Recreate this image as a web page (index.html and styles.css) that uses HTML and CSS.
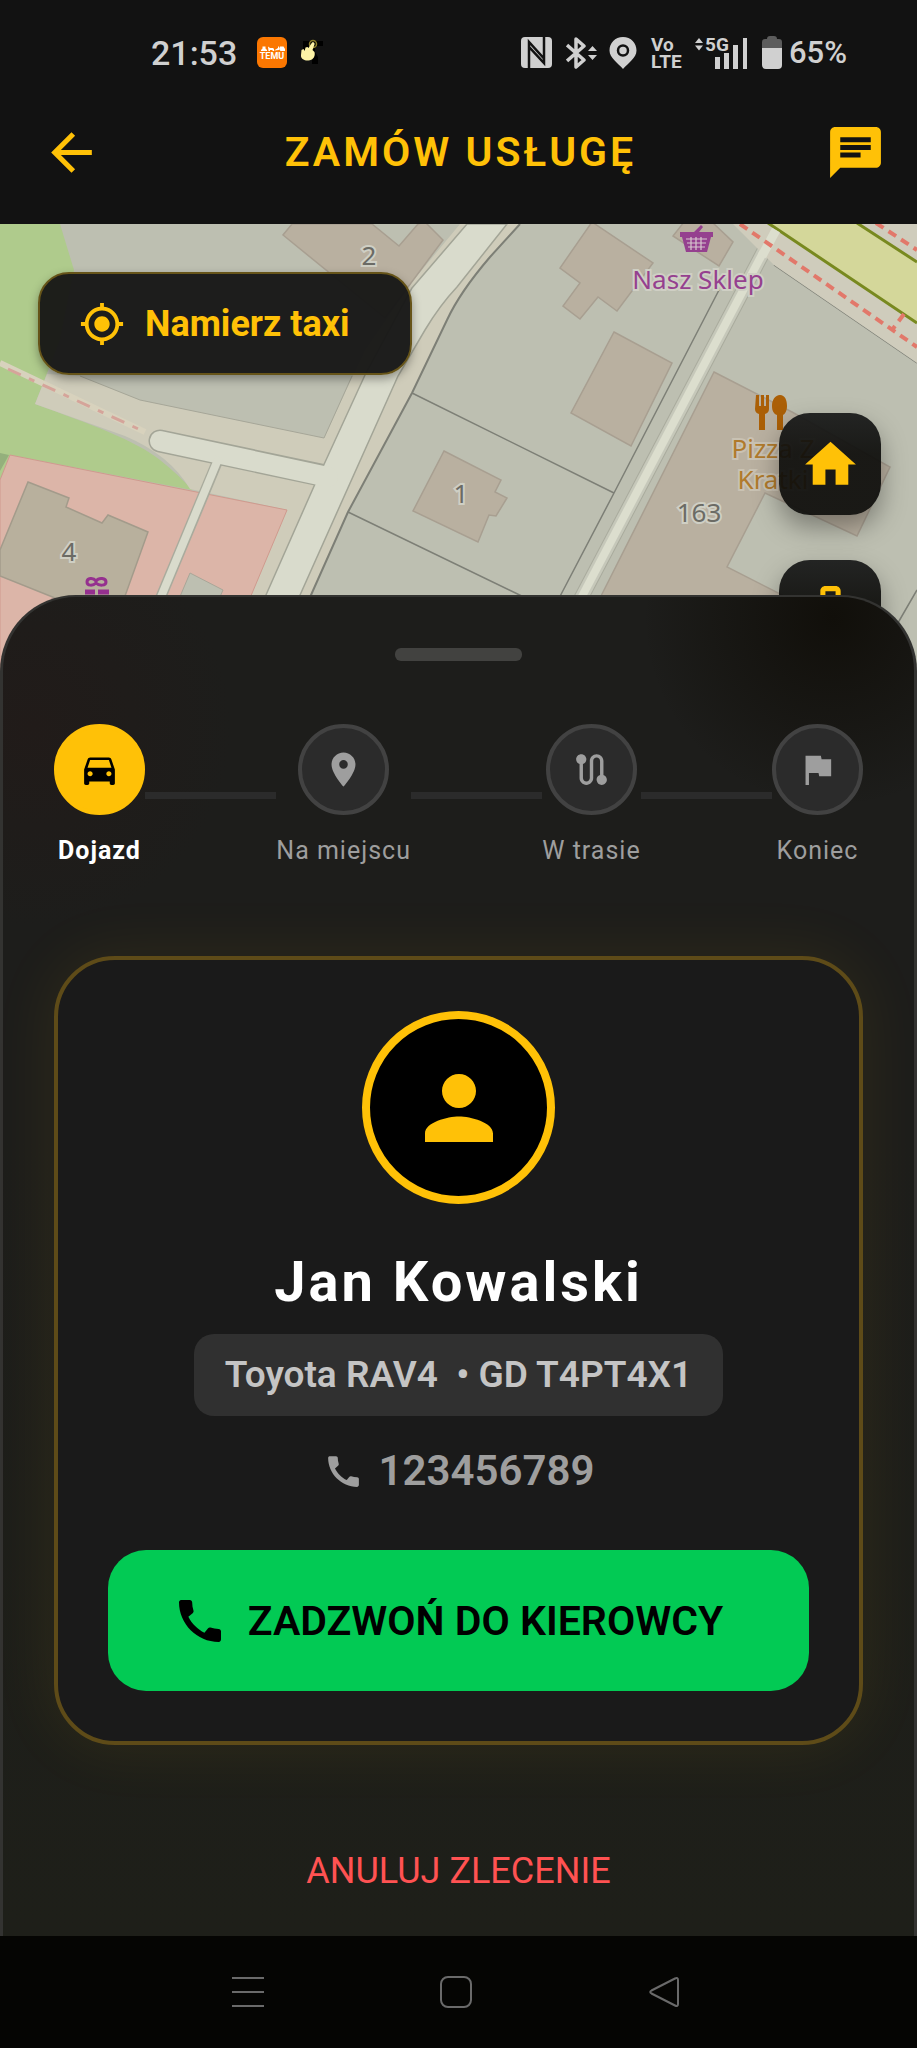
FILE: index.html
```html
<!DOCTYPE html>
<html lang="pl">
<head>
<meta charset="utf-8">
<meta name="viewport" content="width=device-width, initial-scale=1">
<title>Zamów usługę</title>
<link rel="stylesheet" href="styles.css">
</head>
<body>
<header class="top">
  <div class="status">
    <div class="status-group">
      <time class="clock">21:53</time>
      <svg class="ic-temu" viewBox="0 0 30 31" width="30" height="31" aria-hidden="true">
        <rect width="30" height="31" rx="6" fill="#fb7701"/>
        <path d="M4 14v-1l1.500-1.500V9.500h3v2L10 13v1zM11 9.500l2 1.500h3l1 1v2h-1.500v-1h-2.500v1h-1.500zM17 13.500l4-2.500v-1.500h1V13zM23 9.500h3.500L28 12v2h-4.500l-1.500-2z" fill="#fff"/>
        <text x="15" y="22" class="temu-text">TEMU</text>
      </svg>
      <svg class="ic-hand" viewBox="0 0 24 28" width="24" height="28" aria-hidden="true">
        <path d="M2 2h20v5h-8v6l3 5v7h-6v-6H2z" fill="#000"/>
        <circle cx="12" cy="5" r="3.500" fill="none" stroke="#8c7e2a" stroke-width="1.500"/>
        <path d="M11 3.500c1.500-.6 3 .4 2.500 2L11.500 11l2 2c1 4-1 8-6 8.500C3 22-.5 19.500 0 16l.5-5 2-1 1.200 2 .8-3.500 2-.5 1 1z" fill="#fdf3a6"/>
      </svg>
    </div>
    <div class="status-group status-right">
      <svg viewBox="0 0 31 31" width="31" height="31" aria-hidden="true">
        <rect width="31" height="31" rx="4" fill="#d0d0d0"/>
        <path d="M8 31V5l15 16.500V9M23 0v26L8 10v12" fill="none" stroke="#121212" stroke-width="2.500" />
      </svg>
      <svg class="ic-bt" viewBox="0 0 31 32" width="31" height="32" aria-hidden="true">
        <path d="M1 8l17 15-8 7V2l8 7L1 24" fill="none" stroke="#d0d0d0" stroke-width="3.500" stroke-linejoin="round"/>
        <path d="M22 14l4.500-5 4.500 5zM22 18l4.500 5 4.500-5z" fill="#d0d0d0"/>
      </svg>
      <svg class="ic-loc" viewBox="0 0 28 32" width="28" height="32" aria-hidden="true">
        <path d="M14 0C6 0 .5 6 .5 13.500.5 21 9 26 14 32c5-6 13.500-11 13.500-18.500C27.500 6 22 0 14 0z" fill="#d0d0d0"/>
        <circle cx="14" cy="13.500" r="5" fill="none" stroke="#121212" stroke-width="2.500"/>
      </svg>
      <svg class="ic-volte" viewBox="0 0 28 32" width="28" height="32" role="img" aria-label="VoLTE">
        <text x="0" y="14" class="net-text">Vo</text>
        <text x="0" y="31" class="net-text">LTE</text>
      </svg>
      <svg class="ic-signal" viewBox="0 0 53 32" width="53" height="32" role="img" aria-label="5G">
        <path d="M0 6l4-5 4 5zM0 8.500l4 5 4-5z" fill="#d0d0d0"/>
        <text x="10" y="14" class="net-text">5G</text>
        <path d="M20 20h5v12h-5zM29 16h5v16h-5zM38 8h5v24h-5zM48 1h4v31h-4z" fill="#d0d0d0"/>
      </svg>
      <svg class="ic-batt" viewBox="0 0 20 33" width="20" height="33" aria-hidden="true">
        <path d="M0 12V6q0-3 3-3h2q0-3 3-3h4q3 0 3 3h2q3 0 3 3v6z" fill="#5c5c5c"/>
        <path d="M0 12h20v17q0 4-4 4H4q-4 0-4-4z" fill="#d0d0d0"/>
      </svg>
      <span class="percent">65%</span>
    </div>
  </div>
  <div class="appbar">
    <button class="icon-btn" aria-label="Wstecz"><svg class="icon-lg" viewBox="0 0 24 24"><path d="M20 11H7.830l5.590-5.590L12 4l-8 8 8 8 1.410-1.410L7.830 13H20v-2z"/></svg></button>
    <h1 class="title">ZAMÓW USŁUGĘ</h1>
    <button class="icon-btn" aria-label="Czat"><svg class="icon-lg" viewBox="0 0 24 24"><path d="M20 2H4c-1.100 0-1.990.9-1.990 2L2 22l4-4h14c1.100 0 2-.9 2-2V4c0-1.100-.9-2-2-2zM6 9h12v2H6V9zm8 5H6v-2h8v2zm4-6H6V6h12v2z"/></svg></button>
  </div>
</header>

<main class="main">
  <section class="map" aria-label="Mapa">
    <svg class="map-art" viewBox="0 224 917 491" preserveAspectRatio="xMidYMin slice">
      <rect y="224" width="917" height="491" fill="#bdbfb1"/>
      <!-- green area -->
      <path d="M0 224H60L74 270L60 340L35 404C90 424 135 440 160 460Q180 476 192 490L10 455L0 480Z" fill="#afcb8c"/>
      <path d="M0 453L9 455L0 471Z" fill="#94b07c"/>
      <!-- verges -->
      <path d="M47 374L80 376L140 400L324 438L365 350L412 282L460 224H520L490 257Q462 290 447 320L412 393L348 512L305 610H240L287 510L190 489Q170 455 125 436L35 404Z" fill="#cfccba"/>
      <path d="M80 376L140 400L324 438L352 376" fill="none" stroke="#a6a698" stroke-width="1"/>
      <path d="M0 363L145 432" stroke="#d8d2bd" stroke-width="6"/>
      <path d="M8 369L145 432" stroke="#d5a49a" stroke-width="3" stroke-dasharray="14 9 6 9"/>
      <!-- pink block -->
      <path d="M10 455L287 510L245 610L0 715V480Z" fill="#dcb5a8" stroke="#cf9a8e"/>
      <path d="M28 482L69 498L66 507L102 523L108 515L148 532L120 610L55 598L0 576V550Z" fill="#b8b09d" stroke="#a39b8b" stroke-width="1.500"/>
      <path d="M190 573L223 590L216 606H176Z" fill="#bdbfb1" stroke="#a9a698"/>
      <!-- roads -->
      <path d="M218 460L158 604" stroke="#a9ab9d" stroke-width="11"/>
      <path d="M160 441L330 477" stroke="#a3a597" stroke-width="23" stroke-linecap="round"/>
      <path d="M262 604L315 484L365 375L412 288L467 224H507L457 287Q440 305 425 330L398 376L296 604Z" fill="#d9dbcc" stroke="#a3a597" stroke-width="1.500"/>
      <path d="M160 441L328 477" stroke="#d9dbcc" stroke-width="20" stroke-linecap="round"/>
      <path d="M219 457L158 604" stroke="#d9dbcc" stroke-width="8"/>
      <!-- parcel lines -->
      <g fill="none" stroke="#7d7f76" stroke-width="1.500">
        <path d="M307 604L348 512L412 393L447 320Q460 292 490 257L520 224" stroke-width="2"/>
        <path d="M412 393L614 493M348 512L530 600M719 290L614 493L556 604M774 265L917 363M917 590L895 628"/>
      </g>
      <!-- narrow road -->
      <path d="M776 228L578 604" stroke="#a9ab9d" stroke-width="15"/>
      <path d="M776 228L578 604" stroke="#c6c8ba" stroke-width="13"/>
      <path d="M776 228L578 604" stroke="#dcdece" stroke-width="8"/>
      <!-- main street -->
      <path d="M733 224H917V363L774 265Z" fill="#cfccbc"/>
      <path d="M770 224H859L917 262V323Z" fill="#d4d79a"/>
      <path d="M768 223L917 323M857 223L917 262" stroke="#78891f" stroke-width="3"/>
      <path d="M776 230L762 256" stroke="#dcdece" stroke-width="9"/>
      <path d="M740 224L917 347M876 223L917 250M904 314L892 330" stroke="#e2786a" stroke-width="4" stroke-dasharray="9 6"/>
      <!-- buildings -->
      <g fill="#b9b0a0" stroke="#a89f91" stroke-width="1.500">
        <path d="M292 224L283 235L385 318L443 240L425 222L418 224L399 246L372 224Z"/>
        <path d="M444 451L501 480L495 492L507 498L496 516L489 515L478 542L413 511Z"/>
        <path d="M592 222L653 263L617 311L598 297L580 319L563 306L580 283L560 268Z"/>
        <path d="M614 332L672 363L631 446L571 413Z"/>
        <path d="M684 222L673 236L719 266L733 242L712 222Z"/>
        <path d="M714 372L792 412L890 467L857 536L765 493L727 567L800 604H597Z"/>
      </g>
      <!-- points of interest -->
      <g fill="#95408f">
        <path d="M680 232H713V237H711L707 252H686L682 237H680ZM694 232L701 225L703 227L699 232Z"/>
        <path d="M686 239H707M687 243H706M688 247H705M691 237V250M696 237V250M701 237V250" stroke="#d8c8cf" stroke-width="1.200"/>
      </g>
      <g fill="none" stroke="#95308f" stroke-width="3">
        <path d="M96 581c-3-4-9-3-9 1s6 4 9 1c3 3 10 3 10-1s-7-5-10-1z"/>
        <path d="M85 592h10M98 592h11M86 599h9M98 599h10" stroke-width="5"/>
      </g>
      <g fill="#ab5f06">
        <path d="M756 395h3v11h2v-11h3v11h2v-11h3v14q0 4-4 5v16h-6v-16q-4-1-4-5zM780 395c5 0 7 5 7 11 0 5-2 8-4 9v15h-6v-15c-3-1-5-4-5-9 0-6 3-11 8-11z"/>
      </g>
      <g class="map-label">
        <text x="369" y="265">2</text>
        <text x="69" y="561">4</text>
        <text x="461" y="503">1</text>
        <text x="699" y="522">163</text>
        <text x="698" y="289" class="label-shop">Nasz Sklep</text>
        <text x="773" y="458" class="label-food">Pizza Z</text>
        <text x="773" y="489" class="label-food">Kratki</text>
      </g>
    </svg>
    <button class="locate"><svg class="icon-md" viewBox="0 0 24 24"><path d="M12 8c-2.210 0-4 1.790-4 4s1.790 4 4 4 4-1.790 4-4-1.790-4-4-4zm8.940 3A8.994 8.994 0 0 0 13 3.060V1h-2v2.060A8.994 8.994 0 0 0 3.060 11H1v2h2.060A8.994 8.994 0 0 0 11 20.940V23h2v-2.060A8.994 8.994 0 0 0 20.940 13H23v-2h-2.060zM12 19c-3.870 0-7-3.130-7-7s3.130-7 7-7 7 3.130 7 7-3.130 7-7 7z"/></svg><span>Namierz taxi</span></button>
    <div class="fabs">
      <button class="fab" aria-label="Dom"><svg class="icon-lg" viewBox="0 0 24 24"><path d="M10 20v-6h4v6h5v-8h3L12 3 2 12h3v8z"/></svg></button>
      <button class="fab" aria-label="Praca"><svg class="icon-lg" viewBox="0 0 24 24"><path d="M20 6h-4V4c0-1.110-.89-2-2-2h-4c-1.110 0-2 .89-2 2v2H4c-1.110 0-1.990.89-1.990 2L2 19c0 1.110.89 2 2 2h16c1.110 0 2-.89 2-2V8c0-1.110-.89-2-2-2zm-6 0h-4V4h4v2z"/></svg></button>
    </div>
  </section>

  <section class="sheet">
    <div class="handle"></div>
    <ol class="steps">
      <li class="step active"><span class="dot"><svg class="icon-sm" viewBox="0 0 24 24"><path d="M18.920 6.010C18.720 5.420 18.160 5 17.500 5h-11c-.66 0-1.210.42-1.420 1.010L3 12v8c0 .55.45 1 1 1h1c.55 0 1-.45 1-1v-1h12v1c0 .55.45 1 1 1h1c.55 0 1-.45 1-1v-8l-2.080-5.990zM6.500 16c-.83 0-1.500-.67-1.500-1.500S5.670 13 6.500 13s1.500.67 1.500 1.500S7.330 16 6.500 16zm11 0c-.83 0-1.500-.67-1.500-1.500s.67-1.500 1.500-1.500 1.500.67 1.500 1.500-.67 1.500-1.500 1.500zM5 11l1.500-4.500h11L19 11H5z"/></svg></span><span class="step-label">Dojazd</span></li>
      <li class="line" aria-hidden="true"></li>
      <li class="step"><span class="dot"><svg class="icon-sm" viewBox="0 0 24 24"><path d="M12 2C8.130 2 5 5.130 5 9c0 5.250 7 13 7 13s7-7.750 7-13c0-3.870-3.130-7-7-7zm0 9.500c-1.380 0-2.500-1.120-2.500-2.500s1.120-2.500 2.500-2.500 2.500 1.120 2.500 2.500-1.120 2.500-2.500 2.500z"/></svg></span><span class="step-label">Na miejscu</span></li>
      <li class="line" aria-hidden="true"></li>
      <li class="step"><span class="dot"><svg class="icon-sm" viewBox="0 0 24 24"><path d="M19 15.180V7c0-2.210-1.790-4-4-4s-4 1.790-4 4v10c0 1.100-.9 2-2 2s-2-.9-2-2V8.820C8.160 8.400 9 7.300 9 6c0-1.660-1.340-3-3-3S3 4.340 3 6c0 1.300.84 2.400 2 2.820V17c0 2.210 1.790 4 4 4s4-1.790 4-4V7c0-1.100.9-2 2-2s2 .9 2 2v8.180A2.996 2.996 0 0 0 18 21c1.660 0 3-1.340 3-3 0-1.300-.84-2.400-2-2.820z"/></svg></span><span class="step-label">W trasie</span></li>
      <li class="line" aria-hidden="true"></li>
      <li class="step"><span class="dot"><svg class="icon-sm" viewBox="0 0 24 24"><path d="M14.400 6L14 4H5v17h2v-7h5.600l.4 2h7V6z"/></svg></span><span class="step-label">Koniec</span></li>
    </ol>

    <article class="card">
      <div class="avatar"><svg viewBox="0 0 24 24"><path d="M12 12c2.210 0 4-1.790 4-4s-1.790-4-4-4-4 1.790-4 4 1.790 4 4 4zm0 2c-2.670 0-8 1.340-8 4v2h16v-2c0-2.660-5.330-4-8-4z"/></svg></div>
      <h2 class="name">Jan Kowalski</h2>
      <p class="vehicle">Toyota RAV4 &nbsp;• GD T4PT4X1</p>
      <p class="phone"><svg class="icon-sm" viewBox="0 0 24 24"><path d="M20.010 15.380c-1.230 0-2.420-.2-3.530-.56-.35-.12-.74-.03-1.010.24l-1.570 1.970c-2.830-1.350-5.480-3.900-6.890-6.830l1.950-1.660c.27-.28.35-.67.24-1.020-.37-1.110-.56-2.300-.56-3.530 0-.54-.45-.99-.99-.99H4.190C3.650 3 3 3.240 3 3.990 3 13.280 10.730 21 20.010 21c.71 0 .99-.63.99-1.180v-3.450c0-.54-.45-.99-.99-.99z"/></svg><span>123456789</span></p>
      <button class="call"><svg class="icon-call" viewBox="0 0 24 24"><path d="M20.010 15.380c-1.230 0-2.420-.2-3.530-.56-.35-.12-.74-.03-1.010.24l-1.570 1.970c-2.830-1.350-5.480-3.900-6.890-6.830l1.950-1.660c.27-.28.35-.67.24-1.020-.37-1.110-.56-2.300-.56-3.530 0-.54-.45-.99-.99-.99H4.190C3.650 3 3 3.240 3 3.990 3 13.280 10.730 21 20.010 21c.71 0 .99-.63.99-1.180v-3.450c0-.54-.45-.99-.99-.99z"/></svg><span>ZADZWOŃ DO KIEROWCY</span></button>
    </article>

    <button class="cancel">ANULUJ ZLECENIE</button>
  </section>
</main>

<nav class="sysnav" aria-label="System">
  <button class="sys-btn" aria-label="Ostatnie"><svg viewBox="0 0 32 32"><path d="M0 2h32M0 16h32M0 30h32"/></svg></button>
  <button class="sys-btn" aria-label="Ekran główny"><svg viewBox="0 0 32 32"><rect x="1" y="1" width="30" height="30" rx="7"/></svg></button>
  <button class="sys-btn" aria-label="Cofnij"><svg viewBox="0 0 32 32"><path d="M27 2.500L3.500 14.500Q1 16 3.500 17.500L27 29.500Q30 31 30 28V4Q30 1 27 2.500Z"/></svg></button>
</nav>
</body>
</html>
```
FILE: styles.css
```css
* { box-sizing: border-box; }

:root {
  --gold: #ffc107;
  --ink: #121212;
  --muted: #9e9e9e;
}

body {
  margin: 0;
  min-height: 100vh;
  display: flex;
  flex-direction: column;
  background: #1d1d1b;
  color: #fff;
  font-family: Roboto, "Liberation Sans", sans-serif;
}

h1, h2, p, ol { margin: 0; padding: 0; }
ol { list-style: none; }
button {
  border: 0;
  padding: 0;
  background: none;
  color: inherit;
  font: inherit;
  cursor: pointer;
}
svg { display: block; flex: none; }

.icon-lg { width: 61px; height: 61px; fill: currentColor; }
.icon-md { width: 46px; height: 46px; fill: currentColor; }
.icon-sm { width: 41px; height: 41px; fill: currentColor; }
.icon-call { width: 56px; height: 56px; fill: currentColor; }

/* Header */
.top { height: 224px; background: var(--ink); }

.status {
  height: 105px;
  padding: 0 70px 0 151px;
  display: flex;
  align-items: center;
  justify-content: space-between;
  color: #d0d0d0;
}
.status-group { display: flex; align-items: center; }
.clock { font-size: 34px; font-weight: 500; line-height: 40px; }
.ic-temu { margin-left: 20px; }
.ic-hand { margin-left: 14px; }
.temu-text { font: 700 9px Roboto, sans-serif; fill: #fff; text-anchor: middle; }
.net-text { font: 700 19px Roboto, sans-serif; fill: #d0d0d0; }
.ic-bt, .ic-batt { margin-left: 14px; }
.ic-loc { margin-left: 12px; }
.ic-volte { margin-left: 14px; overflow: visible; }
.ic-signal { margin-left: 16px; overflow: visible; }
.percent { margin-left: 7px; font-size: 31px; font-weight: 500; line-height: 40px; }

.appbar {
  padding: 17px 31px 0 41px;
  display: flex;
  align-items: center;
  justify-content: space-between;
  color: var(--gold);
}
.title { padding: 0 6px 0 0; font-size: 41px; font-weight: 600; line-height: 61px; letter-spacing: 3px; }

/* Map */
.main { flex: 1; display: flex; flex-direction: column; }
.map { position: relative; height: 491px; overflow: hidden; }
.map-art { width: 100%; height: 100%; }
.map-label text {
  font: 26px "Noto Sans", "Open Sans", sans-serif;
  fill: #6b6b65;
  stroke: #cfcfc4;
  stroke-width: 4px;
  paint-order: stroke;
  text-anchor: middle;
}
.map-label .label-shop { fill: #95408f; }
.map-label .label-food { fill: #b07a2c; stroke: #c9c2b3; }

.locate {
  position: absolute;
  top: 48px;
  left: 38px;
  height: 103px;
  padding: 0 60px 0 39px;
  display: flex;
  align-items: center;
  gap: 20px;
  border: 2px solid #665419;
  border-radius: 31px;
  background: rgba(24, 24, 23, 0.97);
  box-shadow: 0 4px 10px rgba(0, 0, 0, 0.35);
  color: var(--gold);
  font-size: 36px;
  font-weight: 700;
}

.fabs {
  position: absolute;
  top: 189px;
  right: 36px;
  display: flex;
  flex-direction: column;
  gap: 45px;
}
.fab {
  width: 102px;
  height: 102px;
  display: grid;
  place-items: center;
  border-radius: 31px;
  background: linear-gradient(rgba(22, 23, 23, 0.92), rgba(12, 12, 10, 0.92) 40%);
  box-shadow: 0 12px 26px rgba(0, 0, 0, 0.35);
  color: var(--gold);
}

/* Bottom sheet */
.sheet {
  position: relative;
  flex: 1;
  margin-top: -120px;
  padding: 51px 51px 40px;
  display: flex;
  flex-direction: column;
  align-items: center;
  border: solid #333331;
  border-width: 2px 3px 0;
  border-radius: 76px 76px 0 0;
  background:
    radial-gradient(circle at 830px 20px, #110f0a, transparent 190px),
    radial-gradient(circle at 30px 130px, #211b19, transparent 200px),
    linear-gradient(#1d1d1b 40%, #1e1f19);
}
.handle { width: 127px; height: 13px; border-radius: 6px; background: #424240; }

.steps {
  align-self: stretch;
  margin-top: 63px;
  display: flex;
  align-items: center;
}
.step { display: flex; flex-direction: column; align-items: center; gap: 21px; color: var(--muted); }
.dot {
  width: 91px;
  height: 91px;
  display: grid;
  place-items: center;
  border: 4px solid #424242;
  border-radius: 50%;
  background: #2b2b2b;
}
.step-label { font-size: 25px; line-height: 30px; letter-spacing: 1px; }
.active .dot { border-color: var(--gold); background: var(--gold); color: #000; }
.active .step-label { color: #fff; font-weight: 700; }
.line { flex: 1; height: 7px; background: #2b2b2b; }

.card {
  align-self: stretch;
  margin-top: 90px;
  padding: 51px 50px 50px;
  display: flex;
  flex-direction: column;
  align-items: center;
  border: 4px solid #5e4b18;
  border-radius: 61px;
  background: #1a1a1a;
  box-shadow: 0 0 64px 4px rgba(255, 193, 7, 0.07);
}
.avatar {
  width: 193px;
  height: 193px;
  display: grid;
  place-items: center;
  border: 8px solid var(--gold);
  border-radius: 50%;
  background: #000;
  color: var(--gold);
}
.avatar svg { width: 102px; height: 102px; fill: currentColor; }
.name { margin-top: 45px; font-size: 56px; font-weight: 700; line-height: 66px; letter-spacing: 3px; }
.vehicle {
  margin-top: 19px;
  padding: 20px 31px;
  border-radius: 20px;
  background: #303030;
  color: #c4c4c4;
  font-size: 37px;
  font-weight: 600;
  line-height: 42px;
}
.phone {
  margin-top: 31px;
  display: flex;
  align-items: center;
  gap: 15px;
  color: var(--muted);
  font-size: 42px;
  font-weight: 600;
  line-height: 48px;
}
.call {
  align-self: stretch;
  margin-top: 55px;
  height: 141px;
  padding-right: 22px;
  display: flex;
  align-items: center;
  justify-content: center;
  gap: 20px;
  border-radius: 38px;
  background: #02ca54;
  color: #000;
  font-size: 41px;
  font-weight: 600;
}
.cancel { margin-top: 102px; color: #ff5252; font-size: 36px; line-height: 48px; }

/* System navigation */
.sysnav {
  height: 112px;
  padding-right: 5px;
  display: flex;
  align-items: center;
  justify-content: center;
  gap: 176px;
  background: #050503;
}
.sys-btn svg { width: 32px; height: 32px; fill: none; stroke: #6a6a6a; stroke-width: 2px; }
```
